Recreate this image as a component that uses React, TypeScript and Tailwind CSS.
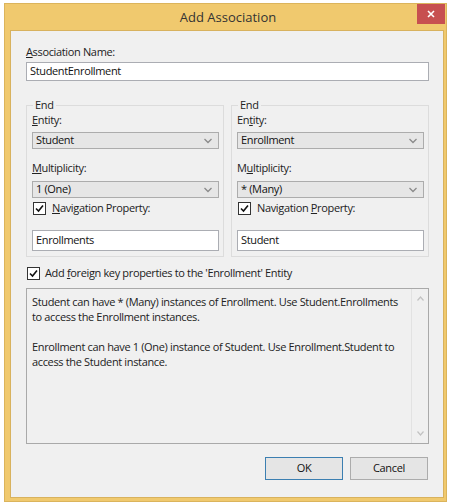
import React from "react";

const font = { fontFamily: '"Open Sans", "Noto Sans", sans-serif' };

function Chevron() {
  return (
    <svg width="8" height="6" viewBox="0 0 8 6" className="shrink-0">
      <path d="M0.5 1 L4 4.5 L7.5 1" fill="none" stroke="#8a8a8a" strokeWidth="1.3" />
    </svg>
  );
}

function Check({ checked = true }: { checked?: boolean }) {
  return (
    <div className="w-[13px] h-[13px] border border-[#333] bg-white flex items-center justify-center shrink-0">
      {checked && (
        <svg width="9" height="9" viewBox="0 0 9 9">
          <path d="M1 4.5 L3.5 7 L8 1.5" fill="none" stroke="#111" strokeWidth="1.6" />
        </svg>
      )}
    </div>
  );
}

function Select({ value }: { value: string }) {
  return (
    <div className="h-[17px] bg-[#e6e6e6] border border-[#acacac] flex items-center justify-between pl-[3px] pr-[6px] text-[#111]">
      <span>{value}</span>
      <Chevron />
    </div>
  );
}

function TextBox({ value, h }: { value: string; h: string }) {
  return (
    <div className={`${h} bg-white border border-[#abadb3] flex items-center pl-[3px] text-[#111]`}>{value}</div>
  );
}

function EndGroup({
  entity,
  mult,
  nav,
  entityLabel,
  multLabel,
  navLabel,
}: {
  entity: string;
  mult: string;
  nav: string;
  entityLabel: React.ReactNode;
  multLabel: React.ReactNode;
  navLabel: React.ReactNode;
}) {
  return (
    <fieldset className="flex-1 border border-[#dcdcdc] pl-[5px] pr-[4px] pb-[5px] flex flex-col">
      <legend className="ml-[1px] px-[2px] leading-[14px] text-[#222]">End</legend>
      <div className="leading-[15px] text-[#222]">{entityLabel}</div>
      <div className="mt-[5px]">
        <Select value={entity} />
      </div>
      <div className="mt-[11px] leading-[15px] text-[#222]">{multLabel}</div>
      <div className="mt-[6px]">
        <Select value={mult} />
      </div>
      <div className="mt-[4px] flex items-center gap-[6px] h-[13px] pl-[1px] text-[#222]">
        <Check />
        <span>{navLabel}</span>
      </div>
      <div className="mt-[15px]">
        <TextBox value={nav} h="h-[21px]" />
      </div>
    </fieldset>
  );
}

export default function App() {
  return (
    <div className="w-[451px] h-[504px] bg-white pl-[4px] pt-[3px] text-[11px] tracking-[-0.35px]" style={font}>
      <div className="w-[443px] h-[499px] bg-[#f0c96e] border border-[#dbb45c] flex flex-col">
        {/* title bar */}
        <div className="h-[26px] relative flex items-center justify-center pl-[5px]">
          <span className="text-[13px] tracking-normal text-[#333] pt-[1px]">Add Association</span>
          <div className="absolute top-0 right-[1px] w-[28px] h-[20px] bg-[#c75050] flex items-center justify-center">
            <svg width="8" height="8" viewBox="0 0 8 8">
              <path d="M1 1 L7 7 M7 1 L1 7" stroke="#fff" strokeWidth="1.6" />
            </svg>
          </div>
        </div>

        {/* client area */}
        <div className="flex-1 ml-[5px] mr-[2px] mb-[3px] bg-[#f0f0f0] border border-[#d8b25e] pl-[15px] pr-[14px] flex flex-col">
          <div className="mt-[13px] leading-[15px] text-[#222]">
            <u>A</u>ssociation Name:
          </div>
          <div className="mt-[3px]">
            <TextBox value="StudentEnrollment" h="h-[19px]" />
          </div>

          <div className="mt-[17px] flex gap-[7px]">
            <EndGroup
              entity="Student"
              mult="1 (One)"
              nav="Enrollments"
              entityLabel={<><u>E</u>ntity:</>}
              multLabel={<><u>M</u>ultiplicity:</>}
              navLabel={<><u>N</u>avigation Property:</>}
            />
            <EndGroup
              entity="Enrollment"
              mult="* (Many)"
              nav="Student"
              entityLabel={<>En<u>t</u>ity:</>}
              multLabel={<>M<u>u</u>ltiplicity:</>}
              navLabel={<>Navigation <u>P</u>roperty:</>}
            />
          </div>

          <div className="mt-[10px] flex items-center gap-[5px] h-[13px] pl-[1px] text-[#222]">
            <Check />
            <span>
              Add <u>f</u>oreign key properties to the 'Enrollment' Entity
            </span>
          </div>

          <div className="mt-[8px] h-[156px] border border-[#a9a9a9] flex">
            <div className="flex-1 pl-[5px] pt-[5px] pr-[4px] leading-[15px] text-[#222]">
              <p>Student can have * (Many) instances of Enrollment. Use Student.Enrollments to access the Enrollment instances.</p>
              <p className="mt-[15px]">Enrollment can have 1 (One) instance of Student. Use Enrollment.Student to access the Student instance.</p>
            </div>
            <div className="w-[17px] border-l border-[#e2e2e2] flex flex-col items-center justify-between py-[7px]">
              <svg width="7" height="5" viewBox="0 0 7 5">
                <path d="M0.5 4.5 L3.5 1 L6.5 4.5" fill="none" stroke="#c2c2c2" strokeWidth="1.2" />
              </svg>
              <svg width="7" height="5" viewBox="0 0 7 5">
                <path d="M0.5 0.5 L3.5 4 L6.5 0.5" fill="none" stroke="#c2c2c2" strokeWidth="1.2" />
              </svg>
            </div>
          </div>

          <div className="mt-[13px] flex justify-end gap-[7px] pr-[1px]">
            <div className="w-[78px] h-[23px] bg-[#e5e5e5] border border-[#3c7fb1] flex items-center justify-center text-[#111]">
              OK
            </div>
            <div className="w-[78px] h-[23px] bg-[#e5e5e5] border border-[#acacac] flex items-center justify-center text-[#111]">
              Cancel
            </div>
          </div>
        </div>
      </div>
    </div>
  );
}
